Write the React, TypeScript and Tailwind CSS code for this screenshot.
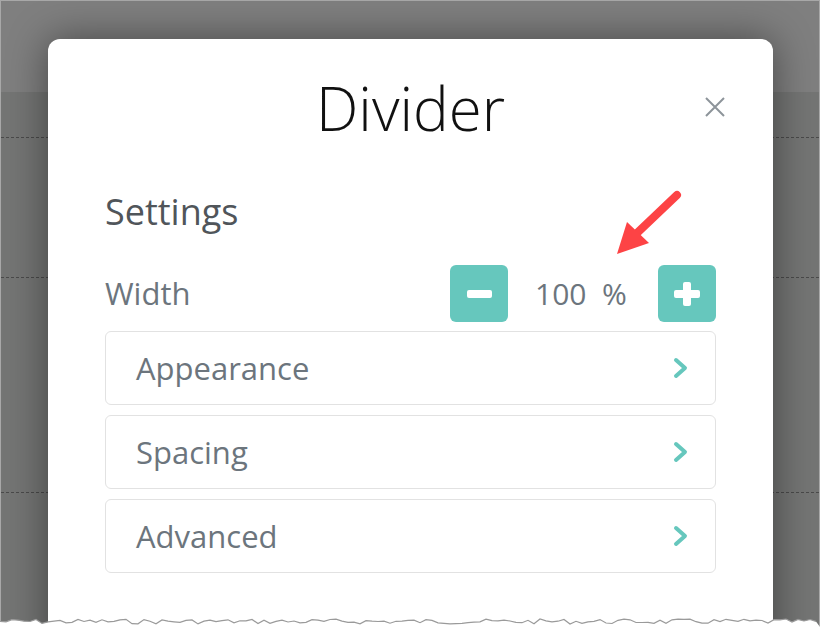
import React from 'react'

const ROWS = ['Appearance', 'Spacing', 'Advanced']

function tornPath() {
  // ragged bottom edge of the screenshot
  let seed = 7
  const rnd = () => {
    seed = (seed * 9301 + 49297) % 233280
    return seed / 233280
  }
  let d = 'M0 622'
  for (let x = 0; x <= 820; x += 6) {
    const y = 619 + rnd() * 5
    d += ` L${x} ${y.toFixed(1)}`
  }
  return d
}

function Chevron() {
  return (
    <svg width="16" height="22" viewBox="0 0 16 22" fill="none">
      <polyline points="3,3 12,11 3,19" stroke="#66c7bd" strokeWidth="4" strokeLinecap="round" strokeLinejoin="round" />
    </svg>
  )
}

export default function App() {
  const edge = tornPath()
  return (
    <div className="relative w-[820px] h-[627px] overflow-hidden bg-white" style={{ fontFamily: '"Open Sans", sans-serif' }}>
      {/* page behind the overlay */}
      <div className="flex flex-col h-[627px] border-x border-t border-[#a8a8a8]">
        <div className="h-[91px] bg-[#7f7f7f]" />
        <div className="flex-1 bg-[#747574] flex flex-col">
          <div className="h-[45px]" />
          <div className="border-t border-dashed border-[#4a4a4a]" />
          <div className="h-[139px]" />
          <div className="border-t border-dashed border-[#4a4a4a]" />
          <div className="h-[214px]" />
          <div className="border-t border-dashed border-[#4a4a4a]" />
        </div>
      </div>

      {/* modal */}
      <div className="absolute left-[48px] top-[39px] w-[725px] h-[620px] bg-white rounded-t-[12px] shadow-[0_0_40px_rgba(0,0,0,0.45)] px-[57px]">
        <div className="relative flex justify-center pt-[39px]">
          <h1 className="text-[60px] leading-none font-light text-[#111]">Divider</h1>
          <button className="absolute right-[-10px] top-[57px] w-[22px] h-[22px]">
            <svg width="22" height="22" viewBox="0 0 22 22">
              <path d="M2 2 L20 20 M20 2 L2 20" stroke="#8d949a" strokeWidth="2" />
            </svg>
          </button>
        </div>

        <h2 className="mt-[56px] text-[36px] leading-none text-[#50555a]">Settings</h2>

        <div className="mt-[35px] flex items-center justify-between">
          <span className="text-[31px] leading-none text-[#6c757d]">Width</span>
          <div className="flex items-center">
            <button className="w-[58px] h-[57px] rounded-[6px] bg-[#66c7bd] flex items-center justify-center">
              <span className="block w-[25px] h-[8px] rounded-[2px] bg-white" />
            </button>
            <span className="w-[150px] pr-[4px] text-center text-[30px] leading-none text-[#6c757d]">100&nbsp; %</span>
            <button className="w-[58px] h-[57px] rounded-[6px] bg-[#66c7bd] flex items-center justify-center relative">
              <span className="absolute w-[26px] h-[8px] rounded-[2px] bg-white" />
              <span className="absolute w-[8px] h-[24px] rounded-[2px] bg-white" />
            </button>
          </div>
        </div>

        <div className="mt-[9px] flex flex-col gap-[10px]">
          {ROWS.map((r) => (
            <div key={r} className="h-[74px] border border-[#e2e2e2] rounded-[6px] flex items-center justify-between pl-[30px] pr-[26px]">
              <span className="text-[31px] leading-none text-[#6c757d]">{r}</span>
              <Chevron />
            </div>
          ))}
        </div>
      </div>

      {/* annotation arrow */}
      <svg className="absolute left-0 top-0 pointer-events-none" width="820" height="627">
        <line x1="677" y1="195" x2="636" y2="234" stroke="#fd4345" strokeWidth="8" strokeLinecap="round" />
        <polygon points="617,254 627,222 649,243" fill="#fd4345" />
      </svg>

      {/* torn edge */}
      <svg className="absolute left-0 top-0 pointer-events-none" width="820" height="627">
        <path d={`${edge} L820 627 L0 627 Z`} fill="#ffffff" />
        <path d={edge} fill="none" stroke="#9a9a9a" strokeWidth="1.2" />
      </svg>
    </div>
  )
}
